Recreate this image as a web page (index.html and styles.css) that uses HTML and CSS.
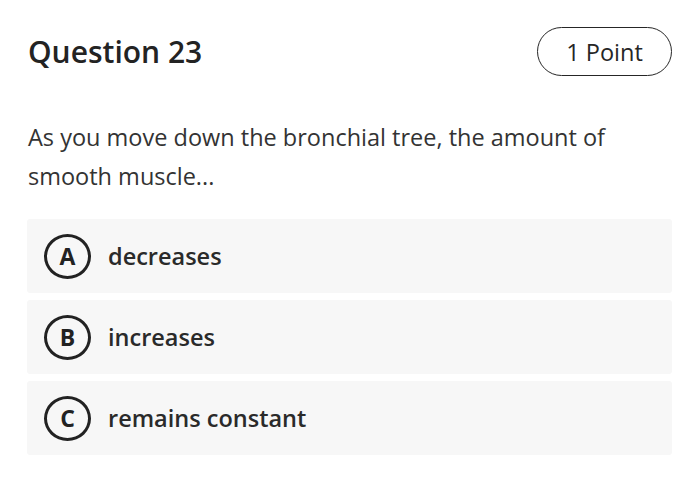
FILE: index.html
```html
<!DOCTYPE html>
<html>
<head>
<meta charset="utf-8">
<link rel="stylesheet" href="styles.css">
</head>
<body>
<div class="page">
  <div class="header">
    <h1 class="title">Question 23</h1>
    <div class="points">1 Point</div>
  </div>
  <p class="question">As you move down the bronchial tree, the amount of smooth muscle...</p>
  <div class="options">
    <div class="option"><span class="letter">A</span><span class="label">decreases</span></div>
    <div class="option"><span class="letter">B</span><span class="label">increases</span></div>
    <div class="option"><span class="letter">C</span><span class="label">remains constant</span></div>
  </div>
</div>
</body>
</html>
```
FILE: styles.css
```css
html, body {
  margin: 0;
  padding: 0;
  background: #ffffff;
}
body {
  font-family: "Open Sans", "Liberation Sans", sans-serif;
  color: #262626;
}
.page {
  padding: 27px 28px 0 27px;
}
.header {
  display: flex;
  justify-content: space-between;
  align-items: center;
  height: 49px;
}
.title {
  margin: 0 0 0 1px;
  font-size: 30px;
  font-weight: 600;
  line-height: 49px;
  color: #232323;
}
.points {
  box-sizing: border-box;
  height: 49px;
  width: 135px;
  border: 1.5px solid #262626;
  border-radius: 25px;
  display: flex;
  align-items: center;
  justify-content: center;
  font-size: 23.5px;
  font-weight: 500;
}
.question {
  margin: 42px 0 0 1px;
  font-size: 23.5px;
  line-height: 39px;
  font-weight: 400;
  color: #333333;
  max-width: 620px;
}
.options {
  margin-top: 23px;
  display: flex;
  flex-direction: column;
  gap: 7px;
}
.option {
  height: 74px;
  background: #f7f7f7;
  border-radius: 3px;
  display: flex;
  align-items: center;
  padding-left: 17px;
}
.letter {
  box-sizing: border-box;
  width: 47px;
  height: 45px;
  border: 3px solid #222222;
  border-radius: 50%;
  display: flex;
  align-items: center;
  justify-content: center;
  font-size: 23px;
  font-weight: 700;
  color: #222222;
}
.label {
  margin-left: 17px;
  font-size: 23.5px;
  font-weight: 600;
  color: #2a2a2a;
}
```
